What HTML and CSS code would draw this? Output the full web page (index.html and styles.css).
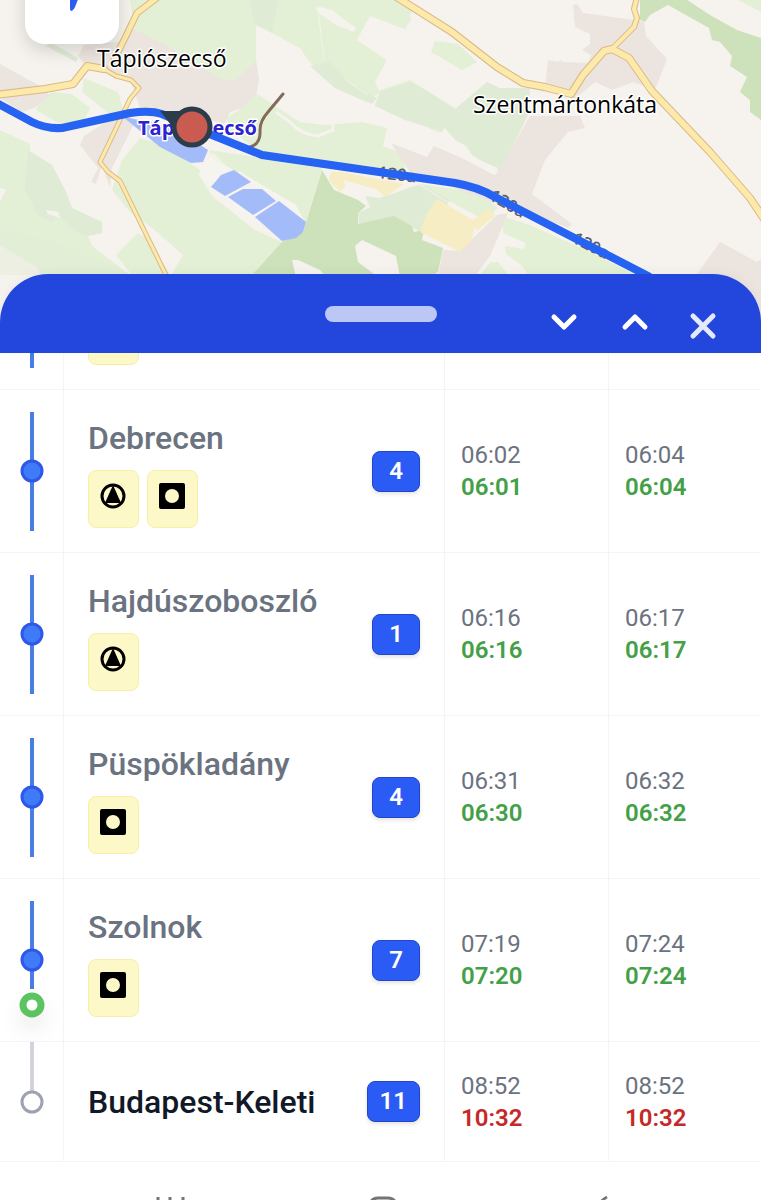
FILE: index.html
```html
<!DOCTYPE html>
<html lang="hu">
<head>
    <meta charset="UTF-8">
    <meta name="viewport" content="width=device-width, initial-scale=1.0">
    <title>Debrecen - Budapest-Keleti</title>
    <link rel="stylesheet" href="styles.css">
</head>
<body>
    <!-- Map -->
    <div class="map">
        <svg class="map-canvas" viewBox="0 0 761 322" preserveAspectRatio="xMidYMin slice">
            <rect width="761" height="322" fill="#f6f3ee"/>

            <!-- Fields -->
            <g fill="#e3f0d6">
                <path d="M130 0H396L412 10L406 28L370 16L357 40L387 60L375 82L380 92L366 102L335 88L308 60L300 48L256 25V60L248 68L235 80L219 78L175 50L135 32Z"/>
                <path d="M243 108L256 93L278 108L300 122L325 125L362 122L387 128L383 146L412 157L404 165L410 180L262 155L232 130L226 118Z"/>
                <path d="M209 150L262 158L322 168L305 224L282 242L250 277H170L183 255L152 228L130 212L112 190L122 160L140 138L165 145L190 163L200 170L199 175L212 196L255 230L282 242L305 222L296 205L250 178L214 160Z"/>
                <path d="M0 130L30 144L30 155L52 165L66 192L72 208L102 222V233L88 236L92 246L130 275H40L38 268L0 245Z"/>
                <path d="M84 78L118 92L124 112L112 116L82 92Z"/>
                <path d="M52 92L72 94L90 108L84 120L60 124L36 110L40 100Z"/>
                <path d="M116 255L138 233L150 240L170 275H132Z"/>
                <path d="M435 41L458 44L477 62L462 70L431 52Z"/>
                <path d="M380 5L412 18L405 29L380 20Z"/>
                <path d="M420 184L480 193L498 208L485 220L460 207Z"/>
                <path d="M502 216L530 225L590 252L640 277H478L494 258L504 240Z"/>
                <path d="M380 90L410 80L455 108L455 125L440 133L375 105Z"/>
                <path d="M738 0H761V12Z"/>
            </g>
            <g fill="#e0ebd6">
                <path d="M250 0H278L272 32L255 25Z"/>
                <path d="M310 66L330 62L346 80L377 98L372 104L335 88Z"/>
                <path d="M380 92L410 82L425 90L455 109L475 92L487 82L500 88H530L528 115L500 172L468 153L440 130L430 128L405 120L375 106Z"/>
                <path d="M28 150L52 165L66 192L72 208L102 222V233L88 236L76 232L60 216L50 222L38 215L25 190Z"/>
                <path d="M365 196L380 198L420 184L450 200L442 214L420 232L395 217L359 224L358 213L370 207Z"/>
                <path d="M50 42L78 58L76 62L46 46Z"/>
                <path d="M495 220L506 214L490 256L470 274L466 258L486 240Z"/>
            </g>
            <g fill="#cde2ba">
                <path d="M322 170L334 190L358 200L366 206L358 213V224L394 216L412 226L414 232L424 230L422 240L443 248L438 272L430 277H250L282 242L303 232Z"/>
                <path d="M640 0H687L710 15L737 30L761 38V120L750 112V100L740 92L747 77L730 66L732 56L720 42L712 40L709 28L668 5L650 15L645 22L640 20Z"/>
            </g>
            <path d="M0 230Q60 240 130 275H0Z" fill="#e1ebd5" opacity="0.5"/>

            <!-- Clearings -->
            <g fill="#f6f3ee">
                <path d="M316 8L320 7L332 10L345 20L356 28L354 32L336 25L320 14Z"/>
                <path d="M292 260L298 260L320 270L326 277H296Z"/>
                <path d="M355 246L362 240L396 256L400 277H378L358 262Z"/>
                <path d="M46 210L58 212L60 218L48 214Z"/>
                <path d="M436 148L436 138L445 128L455 140L466 146L474 158L498 168L494 177L450 158Z"/>
                <path d="M205 165L213 152L232 172L251 183L278 200L303 222L296 205L260 184L238 170L255 222L228 200L212 190L199 175Z" opacity="0.7"/>
                <path d="M478 248L500 232L526 243L524 249L505 246L506 254L522 266L530 277H510L498 262L482 262Z"/>
                <path d="M152 228L183 255L172 270L152 240Z"/>
                <path d="M0 188L6 190L0 202Z"/>
                <path d="M493 212L504 206L512 206L500 216Z"/>
            </g>
            <path d="M276 112L290 122Q300 134 318 136L333 130L333 120" fill="none" stroke="#f6f3ee" stroke-width="3"/>
            <path d="M318 10L324 60M346 80L368 95M415 182L480 222" fill="none" stroke="#f6f3ee" stroke-width="1"/>

            <!-- Built-up areas -->
            <g fill="#ece4de">
                <path d="M84 45L118 42L132 28L175 50L219 78L235 80L256 60L259 78L257 92L243 108L230 112L224 125L190 112L140 108L136 96L130 80L86 66L78 56Z"/>
                <path d="M0 64L40 86L50 96L34 108L22 112L0 98Z"/>
                <path d="M84 136L112 118L126 116L136 120L112 168L110 188L102 165L96 184L91 182L98 168L80 145Z"/>
                <path d="M573 5L577 4L583 13L634 20L644 22L646 36L667 59L655 90L633 82L612 90L595 82L575 99L545 87L560 60L563 62L588 63L591 55L582 50L590 44V34L575 27Z"/>
                <path d="M510 80L530 83L545 87L548 60L575 65L600 60L575 98L545 92L520 86Z"/>
                <path d="M530 116H580L585 128L568 132L545 160L532 194L548 206L572 224L568 228L500 200L478 190L498 172Z"/>
                <path d="M391 143L427 157L434 146L462 158L496 176L498 172L520 200L500 205L410 172Z"/>
                <path d="M497 215L508 213L490 256L474 277H438L443 250L460 251Z"/>
                <path d="M695 277L720 242L757 262L761 259V322H690Z"/>
            </g>

            <!-- Farmland -->
            <g fill="#f6edc5">
                <path d="M331 172L342 172L404 184L385 197L378 190L343 180L346 186L340 192L329 180Z"/>
                <path d="M437 199L473 220L488 209L496 215L478 230L474 228L472 240L460 252L420 232L426 215Z"/>
            </g>

            <!-- Lakes -->
            <g fill="#a4bbfa">
                <path d="M123 117L150 122L178 130L208 150L203 162L191 163L160 147Z"/>
                <path d="M211 187L221 175L234 170L251 182L225 196Z"/>
                <path d="M228 197L243 189L262 189L276 201L253 215Z"/>
                <path d="M255 217L279 201L306 222L303 232L296 238L282 241Z"/>
            </g>

            <!-- Roads -->
            <g fill="none" stroke-linejoin="round" stroke-linecap="round">
                <g stroke="#d9b987">
                    <path d="M-5 95L45 89L73 84L87 66L104 69" stroke-width="8"/>
                    <path d="M114 60L123 42L137 13L158 -3" stroke-width="7"/>
                    <path d="M104 69L116 76L131 80L139 88L130 99L100 162L108 172L120 181L167 277" stroke-width="5"/>
                    <path d="M395 -4L452 32L497 67L523 83L545 87L571 94L583 75L604 51L612 49L629 58L652 91L710 152L750 198L766 222" stroke-width="8"/>
                    <path d="M612 49L634 27L637 18L634 9L637 -3" stroke-width="6"/>
                </g>
                <g stroke="#fde9aa">
                    <path d="M-5 95L45 89L73 84L87 66L104 69" stroke-width="6"/>
                    <path d="M114 60L123 42L137 13L158 -3" stroke-width="5"/>
                    <path d="M104 69L116 76L131 80L139 88L130 99L100 162L108 172L120 181L167 277" stroke-width="3"/>
                    <path d="M395 -4L452 32L497 67L523 83L545 87L571 94L583 75L604 51L612 49L629 58L652 91L710 152L750 198L766 222" stroke-width="6"/>
                    <path d="M612 49L634 27L637 18L634 9L637 -3" stroke-width="4"/>
                </g>
                <path d="M283 94L268 112Q260 121 260 130Q261 144 250 147" stroke="#856a5b" stroke-width="3"/>
            </g>

            <!-- Line numbers -->
            <g class="map-line-no">
                <text transform="translate(377 178) rotate(7)">120a</text>
                <text transform="translate(488 199) rotate(30)">120a</text>
                <text transform="translate(571 242) rotate(27)">120a</text>
            </g>

            <text class="map-station" x="138" y="135">Tápiószecső</text>

            <!-- Route and train -->
            <path d="M-5 102L32 122Q46 129 62 128L130 113Q150 110 162 114L192 127L262 155L455 183Q478 187 495 197L650 277" fill="none" stroke="#2663f3" stroke-width="8" stroke-linejoin="round"/>
            <path d="M160 111H190L178 134Z" fill="#2b3d4b"/>
            <circle cx="192" cy="127" r="18" fill="#c95b50" stroke="#2b3d4b" stroke-width="5"/>

            <text class="map-town" x="97" y="67">Tápiószecső</text>
            <text class="map-town" x="473" y="113">Szentmártonkáta</text>
        </svg>
        <button class="locate-btn" type="button" aria-label="Helyzetem">
            <svg width="48" height="48" viewBox="0 0 48 48"><path d="M44 -10L27 33Q25 37 23 37Q22 37 22 34V16H5Q2 14 5 11Z" fill="#2b5bf0"/></svg>
        </button>
    </div>

    <!-- Train sheet -->
    <div class="sheet">
        <div class="sheet-header">
            <div class="sheet-handle"></div>
            <div class="sheet-actions">
                <button type="button" aria-label="Le"><svg width="36" height="36" viewBox="0 0 36 36"><path d="M11 13L21 23L31 13" stroke="#fff"/></svg></button>
                <button type="button" aria-label="Fel"><svg width="36" height="36" viewBox="0 0 36 36"><path d="M11 23L21 13L31 23" stroke="#fff"/></svg></button>
                <button type="button" aria-label="Bezárás"><svg width="36" height="36" viewBox="0 0 36 36"><path d="M8 12L28 32M28 12L8 32" stroke="#e4e9fd"/></svg></button>
            </div>
        </div>

        <div class="stops-scroll">
            <table class="stops">
                <tbody>
                    <tr>
                        <td class="rail"><svg width="63" height="162"><path d="M32 22V141" class="line-done"/><circle cx="32" cy="81" r="10" class="dot-done"/></svg></td>
                        <td class="station"><div class="station-row"><div>
                            <div class="name"></div>
                            <div class="services"><span class="service"></span></div>
                        </div></div></td>
                        <td class="time"></td>
                        <td class="time"></td>
                    </tr>
                    <tr>
                        <td class="rail"><svg width="63" height="162"><path d="M32 22V141" class="line-done"/><circle cx="32" cy="81" r="10" class="dot-done"/></svg></td>
                        <td class="station"><div class="station-row">
                            <div>
                                <div class="name">Debrecen</div>
                                <div class="services">
                                    <span class="service"><svg width="26" height="26" viewBox="0 0 26 26"><circle cx="13" cy="13" r="11" fill="none" stroke="#000" stroke-width="3"/><path d="M13 2L21 20H5Z"/></svg></span>
                                    <span class="service"><svg width="26" height="26" viewBox="0 0 26 26"><path fill-rule="evenodd" d="M2 0H24Q26 0 26 2V24Q26 26 24 26H2Q0 26 0 24V2Q0 0 2 0ZM13 6A7 7 0 1 0 13 20A7 7 0 1 0 13 6Z"/></svg></span>
                                </div>
                            </div>
                            <span class="track">4</span>
                        </div></td>
                        <td class="time">06:02<strong>06:01</strong></td>
                        <td class="time">06:04<strong>06:04</strong></td>
                    </tr>
                    <tr>
                        <td class="rail"><svg width="63" height="162"><path d="M32 22V141" class="line-done"/><circle cx="32" cy="81" r="10" class="dot-done"/></svg></td>
                        <td class="station"><div class="station-row">
                            <div>
                                <div class="name">Hajdúszoboszló</div>
                                <div class="services">
                                    <span class="service"><svg width="26" height="26" viewBox="0 0 26 26"><circle cx="13" cy="13" r="11" fill="none" stroke="#000" stroke-width="3"/><path d="M13 2L21 20H5Z"/></svg></span>
                                </div>
                            </div>
                            <span class="track">1</span>
                        </div></td>
                        <td class="time">06:16<strong>06:16</strong></td>
                        <td class="time">06:17<strong>06:17</strong></td>
                    </tr>
                    <tr>
                        <td class="rail"><svg width="63" height="162"><path d="M32 22V141" class="line-done"/><circle cx="32" cy="81" r="10" class="dot-done"/></svg></td>
                        <td class="station"><div class="station-row">
                            <div>
                                <div class="name">Püspökladány</div>
                                <div class="services">
                                    <span class="service"><svg width="26" height="26" viewBox="0 0 26 26"><path fill-rule="evenodd" d="M2 0H24Q26 0 26 2V24Q26 26 24 26H2Q0 26 0 24V2Q0 0 2 0ZM13 6A7 7 0 1 0 13 20A7 7 0 1 0 13 6Z"/></svg></span>
                                </div>
                            </div>
                            <span class="track">4</span>
                        </div></td>
                        <td class="time">06:31<strong>06:30</strong></td>
                        <td class="time">06:32<strong>06:32</strong></td>
                    </tr>
                    <tr>
                        <!-- the train is just past this stop -->
                        <td class="rail"><svg width="63" height="162"><path d="M32 22V110" class="line-done"/><circle cx="32" cy="81" r="10" class="dot-done"/><circle cx="32" cy="126" r="9" class="dot-train"/></svg></td>
                        <td class="station"><div class="station-row">
                            <div>
                                <div class="name">Szolnok</div>
                                <div class="services">
                                    <span class="service"><svg width="26" height="26" viewBox="0 0 26 26"><path fill-rule="evenodd" d="M2 0H24Q26 0 26 2V24Q26 26 24 26H2Q0 26 0 24V2Q0 0 2 0ZM13 6A7 7 0 1 0 13 20A7 7 0 1 0 13 6Z"/></svg></span>
                                </div>
                            </div>
                            <span class="track">7</span>
                        </div></td>
                        <td class="time">07:19<strong>07:20</strong></td>
                        <td class="time">07:24<strong>07:24</strong></td>
                    </tr>
                    <tr class="next">
                        <td class="rail"><svg width="63" height="119"><path d="M32 0V50" class="line-next"/><circle cx="32" cy="60" r="10" class="dot-next"/></svg></td>
                        <td class="station"><div class="station-row">
                            <div class="name">Budapest-Keleti</div>
                            <span class="track">11</span>
                        </div></td>
                        <td class="time late">08:52<strong>10:32</strong></td>
                        <td class="time late">08:52<strong>10:32</strong></td>
                    </tr>
                </tbody>
            </table>
        </div>
    </div>

    <!-- Bottom navigation -->
    <nav class="bottom-nav">
        <button type="button" aria-label="Menetrend"><svg width="40" height="40" viewBox="0 0 40 40"><path d="M8 3V10M20 3V10M33 3V10M4 14H36V36H4Z"/></svg></button>
        <button type="button" aria-label="Vonatok"><svg width="40" height="40" viewBox="0 0 40 40"><path d="M9 11Q10 4 17 4H27Q34 4 35 11V30H9Z"/></svg></button>
        <button type="button" aria-label="Térkép"><svg width="40" height="40" viewBox="0 0 40 40"><path d="M36 3Q32 5 29 9L12 36"/></svg></button>
    </nav>
</body>
</html>
```
FILE: styles.css
```css
* {
    box-sizing: border-box;
}
body {
    margin: 0;
    height: 100vh;
    overflow: hidden;
    font-family: Roboto, "Liberation Sans", sans-serif;
    background: #fff;
    color: #6b7280;
}
button {
    padding: 0;
    border: none;
    background: none;
    cursor: pointer;
}
svg {
    display: block;
}

/* Map */
.map {
    position: relative;
    height: 322px;
    overflow: hidden;
}
.map-canvas {
    width: 100%;
    height: 100%;
}
.map-canvas text {
    font-family: "Open Sans", "Noto Sans", sans-serif;
    paint-order: stroke;
    stroke: #fff;
    stroke-width: 3px;
    stroke-linejoin: round;
}
.map-town {
    font-size: 23px;
    fill: #000;
}
.map-station {
    font-size: 20px;
    font-weight: 700;
    fill: #2c22cf;
}
.map-canvas .map-line-no text {
    font-size: 17px;
    font-weight: 600;
    fill: #5f5f66;
    stroke: none;
}
.locate-btn {
    position: absolute;
    left: 25px;
    top: -48px;
    width: 94px;
    height: 92px;
    display: flex;
    align-items: center;
    justify-content: center;
    border-radius: 20px;
    background: #fff;
    box-shadow: 0 6px 18px rgba(0,0,0,0.15);
}

/* Sheet */
.sheet {
    position: relative;
    margin-top: -48px;
}
.sheet-header {
    display: grid;
    grid-template-columns: 1fr auto 1fr;
    align-items: center;
    height: 79px;
    border-radius: 48px 48px 0 0;
    background: #2346dc;
    box-shadow: 0 -2px 12px rgba(0,0,0,0.04);
}
.sheet-handle {
    grid-column: 2;
    width: 112px;
    height: 16px;
    border-radius: 8px;
    background: #bdc7f5;
}
.sheet-actions {
    display: flex;
    justify-content: flex-end;
    padding: 16px 23px 0 0;
}
.sheet-actions button {
    display: flex;
    justify-content: center;
    width: 71px;
}
.sheet-actions path {
    fill: none;
    stroke-width: 5;
    stroke-linecap: round;
    stroke-linejoin: round;
}

/* Stops */
.stops-scroll {
    overflow: hidden;
}
.stops {
    width: 100%;
    margin-top: -126px;
    table-layout: fixed;
    border-spacing: 0;
}
.stops td {
    padding: 0;
    border-right: 1px solid #f3f4f6;
    border-bottom: 1px solid #f3f4f6;
    vertical-align: middle;
}
.stops td:last-child {
    border-right: none;
}
.stops .rail {
    width: 64px;
}
.stops .station {
    padding: 0 24px;
}
.stops .time {
    width: 164px;
    padding-left: 16px;
    font-size: 24px;
    line-height: 32px;
}
.stops .time:last-child {
    width: 152px;
}
.time strong {
    display: block;
    font-weight: 600;
    color: #43a047;
}
.late strong {
    color: #c62828;
}
.station-row {
    display: flex;
    align-items: center;
    justify-content: space-between;
}
.name {
    height: 48px;
    font-size: 32px;
    font-weight: 500;
    line-height: 48px;
}
.next .name {
    color: #111827;
}
.services {
    display: flex;
    gap: 8px;
    margin-top: 8px;
}
.service {
    width: 51px;
    height: 58px;
    padding: 12px 11px;
    border: 1px solid #f7efa5;
    border-radius: 8px;
    background: #fdf8c8;
}
.track {
    min-width: 48px;
    padding: 0 12px;
    border: 1px solid #2346c8;
    border-radius: 8px;
    background: #2b5bf5;
    box-shadow: 0 2px 4px rgba(0,0,0,0.12);
    color: #fff;
    font-size: 24px;
    font-weight: 600;
    line-height: 39px;
    text-align: center;
}

.line-done {
    stroke: #4a7de2;
    stroke-width: 4;
}
.line-next {
    stroke: #d1d5db;
    stroke-width: 4;
}
.dot-done {
    fill: #3f7bf7;
    stroke: #2d58ea;
    stroke-width: 3;
}
.dot-next {
    fill: #fff;
    stroke: #9ca3af;
    stroke-width: 3;
}
.dot-train {
    fill: #fff;
    stroke: #5cc45f;
    stroke-width: 7;
    filter: drop-shadow(0 12px 10px rgba(0,0,0,0.08));
}

/* Bottom navigation */
.bottom-nav {
    display: flex;
    justify-content: space-between;
    padding: 32px 150px 0;
}
.bottom-nav path {
    fill: none;
    stroke: #757575;
    stroke-width: 3;
}
```
